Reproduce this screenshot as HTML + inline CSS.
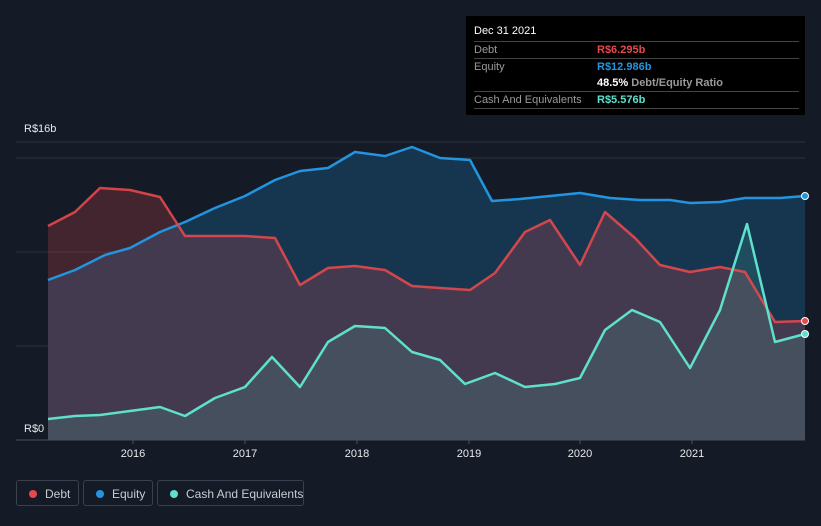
<!DOCTYPE html>
<html><head><meta charset="utf-8"><style>
body{margin:0;background:#151b26;width:821px;height:526px;overflow:hidden;font-family:"Liberation Sans",sans-serif;position:relative}
.tt{position:absolute;left:466px;top:16px;width:339px;height:99px;background:#000;color:#fff;font-size:11px}
.row{position:absolute;left:8px;right:6px;height:17px;border-top:1px solid #444;color:#9a9a9a}
.row span{position:absolute;left:123px;font-weight:bold}
.leg{position:absolute;top:480px;height:26px;border:1px solid #3a414c;border-radius:3px;color:#c8ccd2;font-size:12px;line-height:26px;box-sizing:border-box;white-space:nowrap}
.leg i{position:absolute;left:12px;top:9px;width:8px;height:8px;border-radius:50%}
</style></head><body>
<svg width="821" height="526" style="position:absolute;left:0;top:0">
<g stroke="#2a313c" stroke-width="1">
<line x1="16" x2="805" y1="142" y2="142"/><line x1="16" x2="805" y1="158" y2="158"/>
<line x1="16" x2="805" y1="252" y2="252"/><line x1="16" x2="805" y1="346" y2="346"/>
</g>
<polygon fill="#163650" points="48,280 75,270 105,255 130,248 160,232 185,222 215,208 245,196 275,180 300,171 328,168 355,152 385,156 412,147 440,158 470,160 492,201 520,199 550,196 580,193 610,198 640,200 670,200 690,203 720,202 745,198 780,198 805,196 805,440 48,440"/>
<polygon fill="#e5484d" fill-opacity="0.22" points="48,226 75,212 100,188 130,190 160,197 185,236 215,236 245,236 275,238 300,285 328,268 355,266 385,270 412,286 440,288 470,290 495,273 525,232 550,220 580,265 605,212 635,238 660,265 690,272 720,267 745,272 775,322 805,321 805,440 48,440"/>
<polygon fill="#5fe0cc" fill-opacity="0.13" points="48,419 75,416 100,415 130,411 160,407 185,416 215,398 245,387 272,357 300,387 328,342 355,326 385,328 412,352 440,360 465,384 495,373 525,387 555,384 580,378 605,330 632,310 660,322 690,368 720,310 747,224 775,342 805,334 805,440 48,440"/>
<g fill="none" stroke-width="2.5" stroke-linejoin="round">
<polyline stroke="#2394df" points="48,280 75,270 105,255 130,248 160,232 185,222 215,208 245,196 275,180 300,171 328,168 355,152 385,156 412,147 440,158 470,160 492,201 520,199 550,196 580,193 610,198 640,200 670,200 690,203 720,202 745,198 780,198 805,196"/>
<polyline stroke="#e5484d" stroke-opacity="0.9" points="48,226 75,212 100,188 130,190 160,197 185,236 215,236 245,236 275,238 300,285 328,268 355,266 385,270 412,286 440,288 470,290 495,273 525,232 550,220 580,265 605,212 635,238 660,265 690,272 720,267 745,272 775,322 805,321"/>
<polyline stroke="#5fe0cc" points="48,419 75,416 100,415 130,411 160,407 185,416 215,398 245,387 272,357 300,387 328,342 355,326 385,328 412,352 440,360 465,384 495,373 525,387 555,384 580,378 605,330 632,310 660,322 690,368 720,310 747,224 775,342 805,334"/>
</g>
<circle cx="805" cy="196" r="3.5" fill="#2394df" stroke="#fff"/>
<circle cx="805" cy="321" r="3.5" fill="#e5484d" stroke="#fff"/>
<circle cx="805" cy="334" r="3.5" fill="#5fe0cc" stroke="#fff"/>
<line x1="16" x2="805" y1="440" y2="440" stroke="#4a515c"/>
<g stroke="#4a515c"><line x1="133" x2="133" y1="440" y2="444"/><line x1="245" x2="245" y1="440" y2="444"/><line x1="357" x2="357" y1="440" y2="444"/><line x1="469" x2="469" y1="440" y2="444"/><line x1="580" x2="580" y1="440" y2="444"/><line x1="692" x2="692" y1="440" y2="444"/></g>
<g fill="#e6e8eb" font-size="11" font-family="Liberation Sans,sans-serif" text-anchor="middle">
<text x="133" y="457">2016</text><text x="245" y="457">2017</text><text x="357" y="457">2018</text><text x="469" y="457">2019</text><text x="580" y="457">2020</text><text x="692" y="457">2021</text>
<text x="24" y="132" text-anchor="start">R$16b</text><text x="24" y="432" text-anchor="start">R$0</text>
</g>
</svg>
<div class="tt">
<div style="position:absolute;left:8px;top:9px;font-size:11px">Dec 31 2021</div>
<div class="row" style="top:25px;line-height:17px">Debt<span style="color:#e5484d">R$6.295b</span></div>
<div class="row" style="top:42px;line-height:17px">Equity<span style="color:#2394df">R$12.986b</span></div>
<div class="row" style="top:59px;line-height:17px;border-top:none"><span style="color:#fff">48.5% <b style="color:#9a9a9a">Debt/Equity Ratio</b></span></div>
<div class="row" style="top:75px;line-height:17px">Cash And Equivalents<span style="color:#5fe0cc">R$5.576b</span></div>
<div class="row" style="top:92px;height:0"></div>
</div>
<div class="leg" style="left:16px;width:63px"><i style="background:#e5484d"></i><span style="position:absolute;left:28px">Debt</span></div>
<div class="leg" style="left:83px;width:70px"><i style="background:#2394df"></i><span style="position:absolute;left:28px">Equity</span></div>
<div class="leg" style="left:157px;width:147px"><i style="background:#5fe0cc"></i><span style="position:absolute;left:28px">Cash And Equivalents</span></div>
</body></html>
